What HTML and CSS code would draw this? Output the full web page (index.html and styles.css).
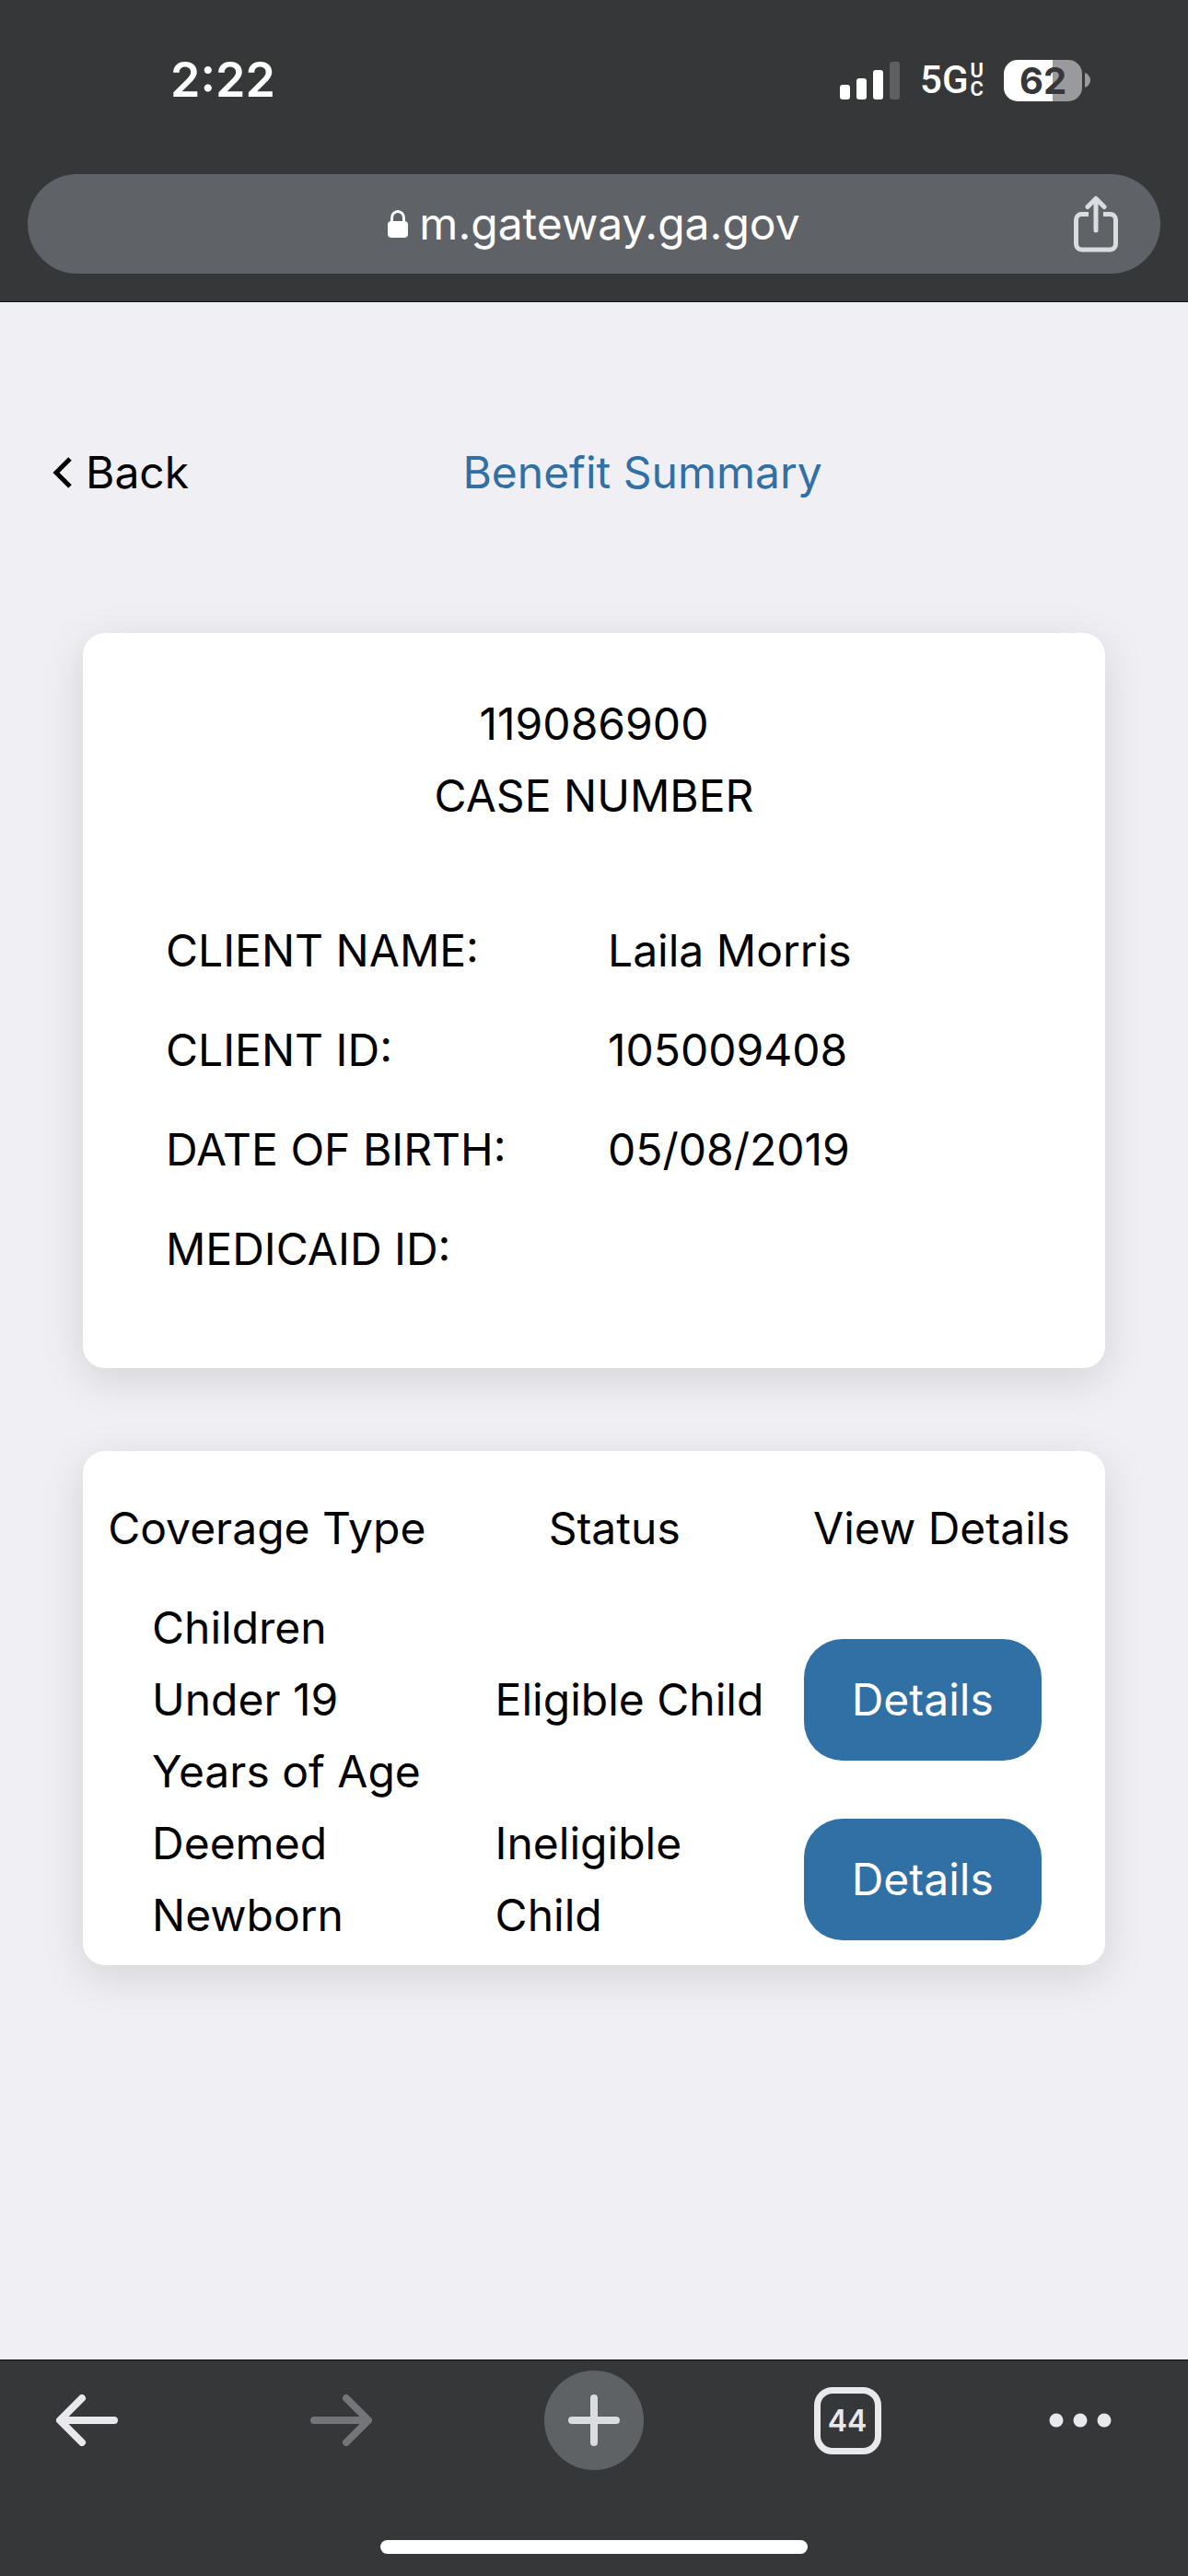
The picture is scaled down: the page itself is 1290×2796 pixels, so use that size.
FILE: index.html
```html
<!DOCTYPE html>
<html lang="en">
<head>
<meta charset="utf-8">
<meta name="viewport" content="width=device-width, initial-scale=1">
<title>Benefit Summary</title>
<link rel="stylesheet" href="styles.css">
</head>
<body>
<header class="browser-top">
  <div class="status-bar">
    <span class="clock">2:22</span>
    <div class="indicators">
      <svg class="signal" width="65" height="41" viewBox="0 0 65 41" aria-hidden="true">
        <rect x="0" y="25" width="11" height="16" rx="3"/>
        <rect x="18" y="18" width="11" height="23" rx="3"/>
        <rect x="36" y="9" width="11" height="32" rx="3"/>
        <rect class="signal-off" x="54" y="0" width="11" height="41" rx="3"/>
      </svg>
      <span class="network">5G<span class="network-band"><span>U</span><span>C</span></span></span>
      <span class="battery"><span class="battery-body">62</span><svg width="6" height="16" viewBox="0 0 6 16" aria-hidden="true"><path d="M0 0C3 1 6 4 6 8S3 15 0 16Z" fill="#9a9a9c"/></svg></span>
    </div>
  </div>
  <div class="address-bar">
    <button class="address" type="button">
      <svg width="22" height="30" viewBox="0 0 22 30" aria-hidden="true">
        <rect x="0" y="12" width="22" height="18" rx="4" fill="#fff"/>
        <path d="M4.500 13V8.500a6.500 7 0 0 1 13 0V13" fill="none" stroke="#fff" stroke-width="3"/>
      </svg>
      <span>m.gateway.ga.gov</span>
    </button>
    <button class="share" type="button" aria-label="Share">
      <svg width="48" height="62" viewBox="0 0 48 62" fill="none" stroke="#dadce0" stroke-width="5" stroke-linecap="round" stroke-linejoin="round" aria-hidden="true">
        <path d="M16 20.500H8.500a6 6 0 0 0-6 6V53a6 6 0 0 0 6 6h31a6 6 0 0 0 6-6V26.500a6 6 0 0 0-6-6H32" stroke-linecap="butt"/>
        <path d="M24 38V4M15 12.500 24 3.500l9 9"/>
      </svg>
    </button>
  </div>
</header>

<main class="page">
  <div class="page-head">
    <a class="back" href="#">
      <svg width="21" height="34" viewBox="0 0 21 34" fill="none" stroke="#000" stroke-width="5" aria-hidden="true"><path d="M19 2 4 17l15 15"/></svg>
      <span>Back</span>
    </a>
    <h1 class="title">Benefit Summary</h1>
  </div>

  <section class="card client">
    <p class="case-number">119086900</p>
    <p class="case-number">CASE NUMBER</p>
    <dl class="facts">
      <dt>CLIENT NAME:</dt><dd>Laila Morris</dd>
      <dt>CLIENT ID:</dt><dd>105009408</dd>
      <dt>DATE OF BIRTH:</dt><dd>05/08/2019</dd>
      <dt>MEDICAID ID:</dt><dd></dd>
    </dl>
  </section>

  <section class="card coverage">
    <table class="coverage-table">
      <colgroup><col class="col-type"><col class="col-status"><col class="col-view"></colgroup>
      <thead>
        <tr><th scope="col">Coverage Type</th><th scope="col">Status</th><th scope="col">View Details</th></tr>
      </thead>
      <tbody>
        <tr><td class="type">Children Under 19 Years of Age</td><td class="state">Eligible Child</td><td class="view"><button class="details" type="button">Details</button></td></tr>
        <tr><td class="type">Deemed Newborn</td><td class="state">Ineligible Child</td><td class="view"><button class="details" type="button">Details</button></td></tr>
      </tbody>
    </table>
  </section>
</main>

<footer class="browser-bottom">
  <nav class="toolbar" aria-label="Browser">
    <button type="button" aria-label="Back">
      <svg width="68" height="56" viewBox="0 0 68 56" fill="none" stroke="#e8e8ed" stroke-width="8" stroke-linecap="round" stroke-linejoin="round" aria-hidden="true"><path d="M63 28H5M28 4 4 28l24 24"/></svg>
    </button>
    <button type="button" aria-label="Forward" disabled>
      <svg width="68" height="56" viewBox="0 0 68 56" fill="none" stroke="#747578" stroke-width="8" stroke-linecap="round" stroke-linejoin="round" aria-hidden="true"><path d="M5 28H63M40 4l24 24-24 24"/></svg>
    </button>
    <button class="new-tab" type="button" aria-label="New tab">
      <svg width="56" height="56" viewBox="0 0 56 56" fill="none" stroke="#dadce0" stroke-width="8" stroke-linecap="round" aria-hidden="true"><path d="M4 28H52M28 4V52"/></svg>
    </button>
    <button class="tabs" type="button" aria-label="44 open tabs">44</button>
    <button type="button" aria-label="More">
      <svg width="68" height="16" viewBox="0 0 68 16" fill="#e8e8ed" aria-hidden="true"><circle cx="8" cy="8" r="7.500"/><circle cx="34" cy="8" r="7.500"/><circle cx="60" cy="8" r="7.500"/></svg>
    </button>
  </nav>
  <div class="home-indicator"></div>
</footer>
</body>
</html>
```
FILE: styles.css
```css
* {
  box-sizing: border-box;
}

body {
  display: flex;
  flex-direction: column;
  min-height: 100vh;
  margin: 0;
  background: #f0eff4;
  color: #000;
  font: 400 48px/78px Inter, "Liberation Sans", sans-serif;
}

button {
  padding: 0;
  border: 0;
  background: none;
  color: inherit;
  font: inherit;
}

svg {
  display: block;
  flex: none;
}

h1,
p,
dl,
dd {
  margin: 0;
  font-size: inherit;
  font-weight: 400;
}

/* Browser chrome, top */
.browser-top {
  padding: 0 30px 30px;
  border-bottom: 1px solid #111;
  background: #363739;
  color: #fff;
}

.status-bar {
  display: flex;
  align-items: center;
  justify-content: space-between;
  height: 174px;
  margin-bottom: 15px;
  padding: 0 76px 0 155px;
}

.clock {
  font-size: 52px;
  font-weight: 600;
}

.indicators {
  display: flex;
  align-items: center;
  gap: 22px;
}

.signal {
  fill: #fff;
}

.signal .signal-off {
  fill: #5e5f61;
}

.network {
  display: flex;
  align-items: center;
  gap: 2px;
  font-family: Roboto, Inter, sans-serif;
  font-size: 42px;
  font-weight: 500;
}

.network-band {
  display: flex;
  flex-direction: column;
  font-size: 22px;
  font-weight: 600;
  line-height: 20px;
}

.battery {
  display: flex;
  align-items: center;
  gap: 3px;
}

.battery-body {
  width: 85px;
  border-radius: 15px;
  background: linear-gradient(to right, #fff 62%, #9a9a9c 62%);
  color: #363739;
  font-size: 40px;
  font-weight: 700;
  line-height: 45px;
  text-align: center;
}

.address-bar {
  display: grid;
  grid-template-columns: 1fr auto 1fr;
  align-items: center;
  height: 108px;
  padding: 0 46px;
  border-radius: 54px;
  background: #5f6267;
}

.address {
  display: flex;
  grid-column: 2;
  align-items: center;
  gap: 12px;
}

.share {
  justify-self: end;
}

/* Page content */
.page {
  flex: 1;
  padding: 146px 90px 90px;
}

.page-head {
  display: flex;
  margin: 0 -33px 135px;
}

.back {
  display: flex;
  align-items: center;
  gap: 15px;
  color: inherit;
  text-decoration: none;
}

.title {
  flex: 1;
  padding-right: 43px;
  color: #3070a4;
  text-align: center;
}

.card {
  border-radius: 24px;
  background: #fff;
  box-shadow: 0 12px 48px rgba(0, 0, 0, 0.12);
}

.client {
  margin-bottom: 90px;
  padding: 60px 90px 90px;
}

.case-number {
  text-align: center;
}

.facts {
  display: grid;
  grid-template-columns: 16fr 15fr;
  row-gap: 30px;
  margin-top: 90px;
}

.coverage {
  padding: 45px 0 15px;
}

.coverage-table {
  width: 100%;
  table-layout: fixed;
  border-collapse: collapse;
}

.col-type {
  width: 36%;
}

.col-status {
  width: 32%;
}

.col-view {
  width: 32%;
}

.coverage-table th {
  padding: 0 0 30px;
  font-weight: 400;
  text-align: center;
}

.coverage-table td {
  padding: 0;
  vertical-align: middle;
}

.coverage-table .type {
  padding-left: 75px;
}

.coverage-table .state {
  padding-left: 48px;
}

.coverage-table .view {
  padding-left: 28px;
}

.details {
  display: block;
  width: 258px;
  height: 132px;
  border-radius: 42px;
  background: #3070a4;
  color: #fff;
}

/* Browser chrome, bottom */
.browser-bottom {
  padding: 11px 0 24px;
  border-top: 1px solid #111;
  background: #363739;
}

.toolbar {
  display: grid;
  grid-template-columns: 190fr 360fr 190fr 360fr 145fr;
  align-items: center;
  justify-items: center;
  height: 108px;
  margin-bottom: 76px;
  padding-right: 45px;
}

.new-tab {
  display: grid;
  place-items: center;
  width: 108px;
  height: 108px;
  border-radius: 50%;
  background: #5f6265;
}

.tabs {
  width: 73px;
  height: 73px;
  border: 7px solid #e8e8ed;
  border-radius: 20px;
  color: #e8e8ed;
  font-size: 32px;
  font-weight: 600;
  line-height: 59px;
}

.home-indicator {
  width: 36%;
  height: 15px;
  margin: 0 auto;
  border-radius: 8px;
  background: #fff;
}
```
